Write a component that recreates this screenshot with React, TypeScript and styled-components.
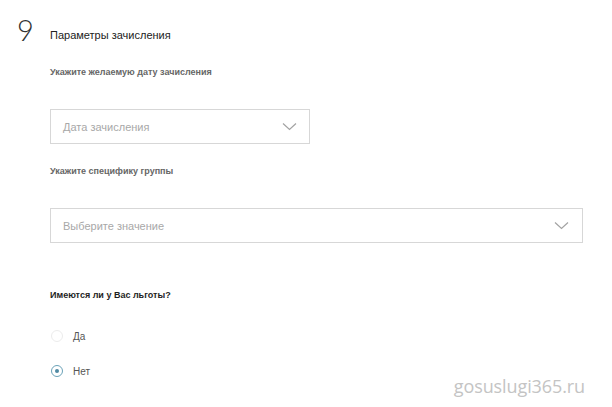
import styled, { createGlobalStyle } from "styled-components";

const Global = createGlobalStyle`
  html, body {
    margin: 0;
    padding: 0;
    background: #fff;
  }
  body {
    font-family: "Liberation Sans", Arial, sans-serif;
  }
`;

const Page = styled.div`
  position: relative;
  width: 612px;
  height: 407px;
  overflow: hidden;
  display: flex;
  padding: 16px 0 0 17px;
  box-sizing: border-box;
`;

const StepNumber = styled.div`
  width: 33px;
  font-family: "Lato", "DejaVu Sans", sans-serif;
  font-weight: 300;
  font-size: 29px;
  line-height: 28px;
  color: #333;
`;

const Body = styled.div`
  display: flex;
  flex-direction: column;
  padding-top: 12px;
`;

const Title = styled.div`
  font-size: 11px;
  color: #222;
  line-height: 14px;
`;

const Label = styled.div<{ $dark?: boolean; $top: number }>`
  margin-top: ${(p) => p.$top}px;
  font-size: 9px;
  font-weight: bold;
  line-height: 12px;
  color: ${(p) => (p.$dark ? "#1e1e1e" : "#666")};
`;

const Select = styled.div<{ $width: number; $top: number }>`
  margin-top: ${(p) => p.$top}px;
  width: ${(p) => p.$width}px;
  height: 35px;
  box-sizing: border-box;
  border: 1px solid #d7d7d7;
  display: flex;
  align-items: center;
  justify-content: space-between;
  padding: 0 12px 0 12px;
  font-size: 11px;
  color: #a8a8a8;
`;

const RadioRow = styled.label<{ $top: number }>`
  margin-top: ${(p) => p.$top}px;
  display: flex;
  align-items: center;
  gap: 10px;
  font-size: 10px;
  color: #555;
  padding-left: 1px;
`;

const RadioCircle = styled.span<{ $checked?: boolean }>`
  width: 12px;
  height: 12px;
  box-sizing: border-box;
  border-radius: 50%;
  border: 1px solid ${(p) => (p.$checked ? "#6aa2b8" : "#ececec")};
  display: flex;
  align-items: center;
  justify-content: center;
  &::after {
    content: "";
    width: 4px;
    height: 4px;
    border-radius: 50%;
    background: ${(p) => (p.$checked ? "#4f8aa3" : "transparent")};
  }
`;

const Watermark = styled.div`
  position: absolute;
  right: 27px;
  bottom: 9px;
  font-family: "Open Sans", sans-serif;
  font-size: 18px;
  color: #c4c4c4;
  letter-spacing: -0.1px;
`;

const Chevron = ({ w = 15 }: { w?: number }) => (
  <svg width={w} height="9" viewBox="0 0 15 9" fill="none">
    <path d="M1 1.5 L7.5 7.5 L14 1.5" stroke="#a3a3a3" strokeWidth="1.2" />
  </svg>
);

export default function App() {
  return (
    <Page>
      <Global />
      <StepNumber>9</StepNumber>
      <Body>
        <Title>Параметры зачисления</Title>
        <Label $top={24}>Укажите желаемую дату зачисления</Label>
        <Select $width={260} $top={31}>
          <span>Дата зачисления</span>
          <Chevron />
        </Select>
        <Label $top={21}>Укажите специфику группы</Label>
        <Select $width={533} $top={31}>
          <span>Выберите значение</span>
          <Chevron w={17} />
        </Select>
        <Label $dark $top={46}>Имеются ли у Вас льготы?</Label>
        <RadioRow $top={29}>
          <RadioCircle />
          Да
        </RadioRow>
        <RadioRow $top={23}>
          <RadioCircle $checked />
          Нет
        </RadioRow>
      </Body>
      <Watermark>gosuslugi365.ru</Watermark>
    </Page>
  );
}
